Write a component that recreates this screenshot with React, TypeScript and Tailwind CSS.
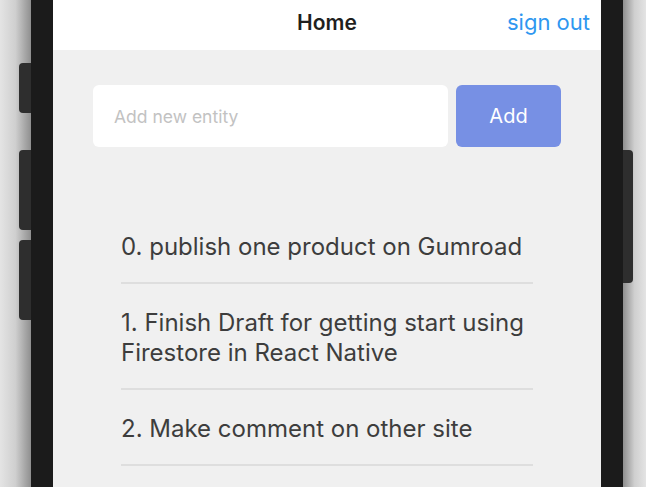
import React, { useState } from 'react'

const items = [
  'publish one product on Gumroad',
  'Finish Draft for getting start using Firestore in React Native',
  'Make comment on other site',
]

const App: React.FC = () => {
  const [entity, setEntity] = useState('')

  return (
    <div className="flex h-[487px] w-[646px] overflow-hidden bg-white font-['Inter','Liberation_Sans',sans-serif]">
      {/* left shadow + side buttons */}
      <div className="relative w-[31px] shrink-0 bg-gradient-to-r from-[#e4e4e4] via-[#cfcfcf] to-[#8f8f8f]">
        <div className="absolute left-[19px] top-[63px] h-[50px] w-[12px] rounded-l-[4px] bg-[#2e2e2e]" />
        <div className="absolute left-[19px] top-[150px] h-[80px] w-[12px] rounded-l-[4px] bg-[#2e2e2e]" />
        <div className="absolute left-[19px] top-[240px] h-[80px] w-[12px] rounded-l-[4px] bg-[#2e2e2e]" />
      </div>

      {/* phone frame */}
      <div className="flex w-[592px] shrink-0 border-x-[22px] border-[#1b1b1b]">
        <div className="flex flex-1 flex-col overflow-hidden bg-[#f0f0f0]">
          <div className="relative flex h-[50px] shrink-0 items-center justify-center bg-white pb-[4px]">
            <span className="text-[21px] font-semibold text-[#1f1f1f]">Home</span>
            <span className="absolute right-[11px] top-[6px] text-[22px] text-[#2f97f0]">sign out</span>
          </div>

          <div className="mx-[40px] mt-[35px] flex shrink-0 gap-[8px]">
            <input
              value={entity}
              onChange={(e) => setEntity(e.target.value)}
              placeholder="Add new entity"
              className="h-[62px] min-w-0 flex-1 rounded-[6px] bg-white px-[21px] text-[17.5px] text-[#333] placeholder:text-[#c2c2c2] outline-none"
            />
            <button className="h-[62px] w-[105px] rounded-[6px] bg-[#7790e4] text-[20px] text-white">
              Add
            </button>
          </div>

          <ul className="mx-[68px] mt-[61px] shrink-0">
            {items.map((item, index) => (
              <li
                key={index}
                className="border-b-2 border-[#dedede] pb-[20px] pt-[24px] text-[24px] leading-[30px] text-[#3d3d3d]"
              >
                {index}. {item}
              </li>
            ))}
          </ul>
        </div>
      </div>

      {/* right shadow + power button */}
      <div className="relative flex-1 bg-gradient-to-r from-[#8f8f8f] via-[#cfcfcf] to-[#e4e4e4]">
        <div className="absolute left-0 top-[150px] h-[133px] w-[10px] rounded-r-[4px] bg-[#2e2e2e]" />
      </div>
    </div>
  )
}

export default App
